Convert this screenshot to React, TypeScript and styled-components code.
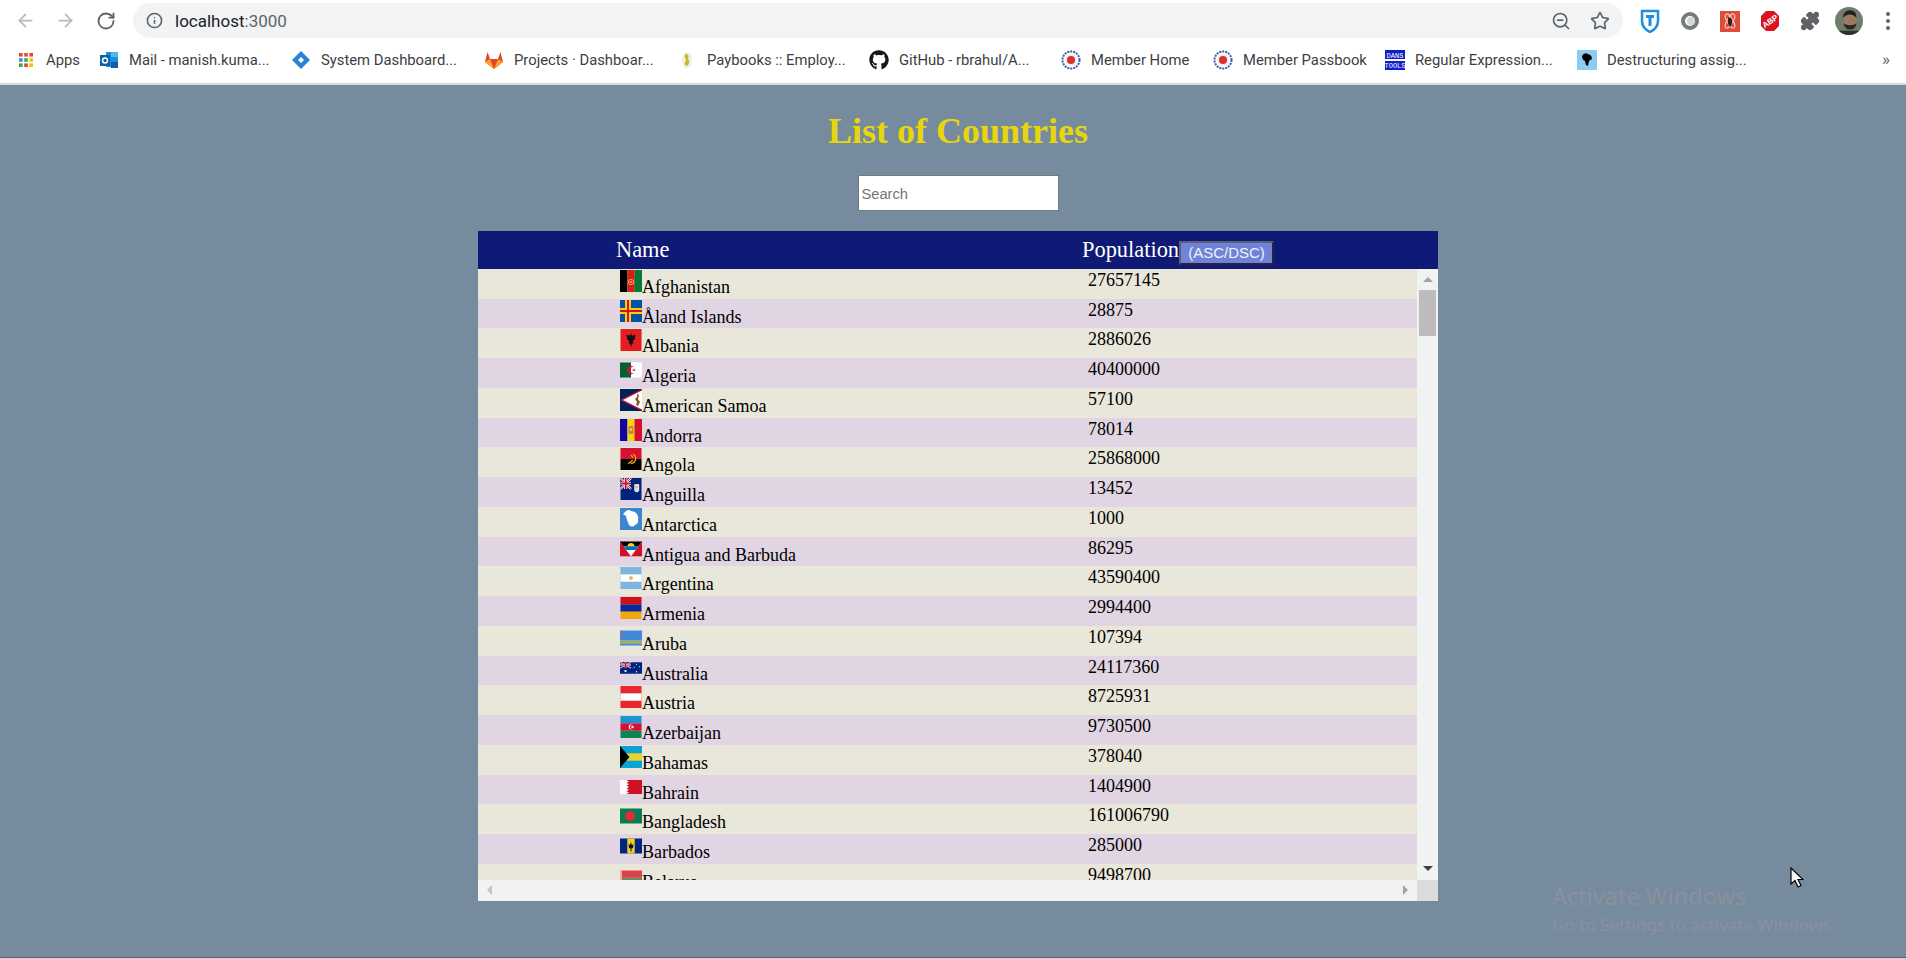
import React from "react";
import styled, { createGlobalStyle } from "styled-components";
import { ArrowLeft, ArrowRight, RotateCw, Info, ZoomOut, Star, Puzzle } from "lucide-react";
import { FaGithub } from "react-icons/fa";

const GlobalStyle = createGlobalStyle`
  html, body { margin: 0; padding: 0; height: 100%; overflow: hidden; }
  body { font-family: "Liberation Serif", "Times New Roman", serif; background: #778b9f; }
`;

const Page = styled.div`
  width: 1906px;
  height: 958px;
  display: flex;
  flex-direction: column;
  position: relative;
  overflow: hidden;
`;

/* browser chrome */
const Chrome = styled.div`
  height: 83px;
  background: #fff;
  border-bottom: 2px solid #d9dadc;
  display: flex;
  flex-direction: column;
  font-family: Roboto, "Liberation Sans", sans-serif;
`;

const NavBar = styled.div`
  height: 41px;
  display: flex;
  align-items: flex-start;
  padding-top: 3px;
  box-sizing: border-box;
`;

const NavButton = styled.div<{ $w: number }>`
  width: ${(p) => p.$w}px;
  height: 35px;
  display: flex;
  align-items: center;
  justify-content: center;
  flex: none;
`;

const NavGroup = styled.div`
  width: 133px;
  padding-left: 5px;
  box-sizing: border-box;
  display: flex;
  flex: none;
`;

const Omnibox = styled.div`
  width: 1490px;
  height: 35px;
  border-radius: 18px;
  background: #f1f3f4;
  display: flex;
  align-items: center;
  padding: 0 12px 0 13px;
  box-sizing: border-box;
  flex: none;
`;

const Url = styled.div`
  margin-left: 12px;
  font-size: 17px;
  color: #5f6368;
  flex: 1;
  span { color: #202124; }
`;

const OmniIcons = styled.div`
  display: flex;
  gap: 19px;
  align-items: center;
  margin-right: 1px;
`;

const Extensions = styled.div`
  display: flex;
  padding-left: 7px;
  align-items: center;
  height: 35px;
`;

const ExtSlot = styled.div<{ $w?: number }>`
  width: ${(p) => p.$w ?? 40}px;
  height: 35px;
  display: flex;
  align-items: center;
  justify-content: center;
  flex: none;
`;

const BookmarkBar = styled.div`
  height: 42px;
  display: flex;
  align-items: flex-start;
  padding: 8px 0 0 16px;
  box-sizing: border-box;
`;

const Bookmark = styled.div<{ $w: number }>`
  width: ${(p) => p.$w}px;
  display: flex;
  align-items: center;
  gap: 10px;
  height: 22px;
  flex: none;
  font-size: 14.8px;
  color: #3c4043;
  white-space: nowrap;
`;

const Favicon = styled.svg`
  width: 20px;
  height: 20px;
  flex: none;
`;

const MoreBookmarks = styled.div`
  margin-left: 137px;
  height: 22px;
  line-height: 20px;
  font-size: 17px;
  color: #5f6368;
`;

/* page content */
const Main = styled.main`
  flex: 1;
  display: flex;
  flex-direction: column;
  align-items: center;
  padding-left: 10px;
  border-bottom: 1px solid #4f6475;
`;

const Title = styled.h1`
  margin: 26px 0 0;
  height: 41px;
  font-size: 36px;
  line-height: 41px;
  font-weight: bold;
  color: #e8d60d;
`;

const Search = styled.input`
  display: block;
  box-sizing: border-box;
  width: 201px;
  height: 36px;
  margin-top: 23px;
  padding: 3px 3px 1px;
  border: 1px solid #777;
  border-radius: 0;
  background: #fff;
  font-family: "Liberation Sans", Arial, sans-serif;
  font-size: 14.67px;
  outline: none;
  &::placeholder { color: #757575; opacity: 1; }
`;

const Table = styled.section`
  width: 960px;
  margin-top: 20px;
`;

const HeaderRow = styled.div`
  height: 37.9px;
  background: #0f1a76;
  color: #fff;
  display: grid;
  grid-template-columns: 466px 1fr;
  padding-left: 138px;
  font-size: 22.4px;
  line-height: 37px;
`;

const SortButton = styled.button`
  box-sizing: border-box;
  height: 24px;
  width: 95px;
  padding: 0;
  vertical-align: -1px;
  border: 2px solid;
  border-color: #5f5f72 #2b2140 #2b2140 #5f5f72;
  background: #6f84d9;
  color: #f2f2f8;
  font-family: "Liberation Sans", Arial, sans-serif;
  font-size: 15px;
  line-height: 20px;
`;

const TableBody = styled.div`
  display: grid;
  grid-template-columns: 939px 21px;
  grid-template-rows: 611.1px 21px;
`;

const Rows = styled.div`
  overflow: hidden;
`;

const Row = styled.div<{ $alt: boolean }>`
  height: 29.75px;
  box-sizing: border-box;
  padding: 1px 0 0 142px;
  display: grid;
  grid-template-columns: 468px 1fr;
  background: ${(p) => (p.$alt ? "#e1d5e3" : "#e9e6da")};
  color: #000;
  font-size: 18px;
  white-space: nowrap;
`;

const NameCell = styled.div`
  line-height: normal;
`;

const FlagBox = styled.svg`
  width: 22px;
  height: 22px;
  display: inline-block;
  vertical-align: 1px;
`;

const Pop = styled.div`
  line-height: 21px;
`;

const VScroll = styled.div`
  background: #f1f3f3;
  display: flex;
  flex-direction: column;
  align-items: center;
  position: relative;
`;

const Thumb = styled.div`
  width: 17px;
  height: 46px;
  margin-top: 8px;
  background: #bdbbbc;
`;

const ArrowUp = styled.div`
  width: 0;
  height: 0;
  margin-top: 8px;
  border-left: 5px solid transparent;
  border-right: 5px solid transparent;
  border-bottom: 5px solid #a3a3a3;
`;

const ArrowDown = styled.div`
  position: absolute;
  bottom: 9px;
  width: 0;
  height: 0;
  border-left: 5px solid transparent;
  border-right: 5px solid transparent;
  border-top: 5px solid #404040;
`;

const HScroll = styled.div`
  background: #f1f3f3;
  display: flex;
  align-items: center;
  justify-content: space-between;
  padding: 0 9px;
`;

const ArrowSide = styled.div<{ $dir: "left" | "right" }>`
  width: 0;
  height: 0;
  border-top: 5px solid transparent;
  border-bottom: 5px solid transparent;
  ${(p) => (p.$dir === "left" ? "border-right: 5px solid #c4c6c6;" : "border-left: 5px solid #a3a3a3;")}
`;

const Corner = styled.div`
  background: #dcdcdc;
`;

const Watermark = styled.div`
  position: absolute;
  left: 1552px;
  top: 880px;
  font-family: "Noto Sans", "Open Sans", sans-serif;
  color: #8a919c;
  white-space: nowrap;
`;

const WatermarkTitle = styled.div`
  font-size: 23.5px;
  line-height: 32px;
`;

const WatermarkSub = styled.div`
  font-size: 17.1px;
  line-height: 24px;
  margin-top: 1px;
`;

const Cursor = styled.svg`
  position: absolute;
  left: 1790px;
  top: 867px;
  width: 14px;
  height: 21px;
`;

/* flags */
const UnionJack = ({ w, h }: { w: number; h: number }) => (
  <g>
    <rect width={w} height={h} fill="#012169" />
    <path d={`M0 0L${w} ${h}M${w} 0L0 ${h}`} stroke="#fff" strokeWidth={h / 5} />
    <path d={`M0 0L${w} ${h}M${w} 0L0 ${h}`} stroke="#c8102e" strokeWidth={h / 12} />
    <path d={`M${w / 2} 0V${h}M0 ${h / 2}H${w}`} stroke="#fff" strokeWidth={h / 3.4} />
    <path d={`M${w / 2} 0V${h}M0 ${h / 2}H${w}`} stroke="#c8102e" strokeWidth={h / 6} />
  </g>
);

const Flag = ({ vb, children }: { vb: [number, number]; children: React.ReactNode }) => (
  <FlagBox viewBox={`0 0 ${vb[0]} ${vb[1]}`}>{children}</FlagBox>
);

const flags: Record<string, React.ReactNode> = {
  Afghanistan: (
    <Flag vb={[22, 22]}>
      <rect width="7.4" height="22" fill="#000" />
      <rect x="7.4" width="7.4" height="22" fill="#d32011" />
      <rect x="14.8" width="7.2" height="22" fill="#007a36" />
      <circle cx="11" cy="12" r="2.6" fill="none" stroke="#e8a48c" strokeWidth="1" />
      <circle cx="11" cy="12" r="0.9" fill="#eec0a0" />
    </Flag>
  ),
  Åland: (
    <Flag vb={[22, 22]}>
      <rect width="22" height="22" fill="#0053a5" />
      <path d="M8 0V22M0 11H22" stroke="#ffce00" strokeWidth="6" />
      <path d="M8 0V22M0 11H22" stroke="#d21034" strokeWidth="2" />
    </Flag>
  ),
  Albania: (
    <Flag vb={[22, 23]}>
      <rect width="22" height="23" fill="#e41e20" />
      <path d="M11 4.500L12 7L15.500 6L15 11L13 12L13.500 15L12 15.500L11 19L10 15.500L8.500 15L9 12L7 11L6.500 6L10 7z" fill="#111" />
    </Flag>
  ),
  Algeria: (
    <Flag vb={[22, 15]}>
      <rect width="11" height="15" fill="#006233" />
      <rect x="11" width="11" height="15" fill="#fff" />
      <path d="M13.500 4.300A4 4 0 1 0 13.500 10.700A3.200 3.200 0 1 1 13.500 4.300z" fill="#d21034" />
      <path d="M12 7.500L15.500 6L14.500 7.500L15.500 9z" fill="#d21034" />
    </Flag>
  ),
  "American Samoa": (
    <Flag vb={[22, 22]}>
      <rect width="22" height="22" fill="#00205b" />
      <path d="M22 0L0 11L22 22z" fill="#c8102e" />
      <path d="M22 1.500L3 11L22 20.500z" fill="#fff" />
      <path d="M17 5l2 1-1 4 2 3-2 4-2-1 1-3-2-3 2-2z" fill="#8a5a2b" />
    </Flag>
  ),
  Andorra: (
    <Flag vb={[22, 22]}>
      <rect width="7.500" height="22" fill="#10069f" />
      <rect x="7.500" width="7" height="22" fill="#f0da0a" />
      <rect x="14.500" width="7.500" height="22" fill="#d50f2c" />
      <rect x="8.500" y="7" width="5" height="8" rx="1.500" fill="#c7832e" />
      <rect x="9.800" y="9" width="2.400" height="3" fill="#e6c26a" />
    </Flag>
  ),
  Angola: (
    <Flag vb={[22, 23]}>
      <rect width="22" height="11.500" fill="#d5122f" />
      <rect y="11.500" width="22" height="11.500" fill="#000" />
      <path d="M13 6.500A5 5 0 0 1 10.500 16" fill="none" stroke="#f5a81c" strokeWidth="1.300" />
      <path d="M8 16.500L13 12.500M11 7.500L13 10" stroke="#f5a81c" strokeWidth="1.200" fill="none" />
    </Flag>
  ),
  Anguilla: (
    <Flag vb={[22, 23]}>
      <rect width="22" height="23" fill="#00247d" />
      <UnionJack w={11} h={11.500} />
      <path d="M14.500 6.500h5v6.500q-2.500 4-5 0z" fill="#fff" />
      <path d="M14.800 12h4.400q-2.200 4.500-4.400 0z" fill="#9fd0ee" />
      <path d="M15.500 8h3v3h-3z" fill="#e8b06a" />
    </Flag>
  ),
  Antarctica: (
    <Flag vb={[22, 22]}>
      <rect width="22" height="22" fill="#3a86d1" />
      <path d="M6 3Q9 1 11 3L15 4Q19 7 18 12Q19 15 15 17Q12 20 9 17L7 12L6 8L3 6z" fill="#fff" />
    </Flag>
  ),
  "Antigua and Barbuda": (
    <Flag vb={[22, 15]}>
      <rect width="22" height="15" fill="#ce1126" />
      <rect y="14.500" width="22" height=".5" fill="#eebcb0" />
      <path d="M0 0H22L11 15z" fill="#fff" />
      <path d="M0 0H22L18.300 5H3.700z" fill="#000" />
      <path d="M7.500 5a3.500 3.500 0 0 1 7 0z" fill="#fcd116" />
      <path d="M3.700 5H18.300L15.700 8.500H6.300z" fill="#0072c6" />
    </Flag>
  ),
  Argentina: (
    <Flag vb={[22, 23]}>
      <rect width="22" height="23" fill="#7eb4e0" />
      <rect y="7.700" width="22" height="7.700" fill="#fff" />
      <circle cx="11" cy="11.500" r="2" fill="#e8b45a" />
    </Flag>
  ),
  Armenia: (
    <Flag vb={[22, 23]}>
      <rect width="22" height="7.700" fill="#d00f17" />
      <rect y="7.700" width="22" height="7.700" fill="#0a2a90" />
      <rect y="15.400" width="22" height="7.600" fill="#f0a80c" />
    </Flag>
  ),
  Aruba: (
    <Flag vb={[22, 15]}>
      <rect width="22" height="15" fill="#4189dd" />
      <rect y="10" width="22" height="1" fill="#f0d020" />
      <rect y="12" width="22" height="1" fill="#f0d020" />
      <path d="M3.500 2l.7 1.800 1.800.7-1.800.7-.7 1.800-.7-1.800-1.800-.7 1.800-.7z" fill="#e05050" />
    </Flag>
  ),
  Australia: (
    <Flag vb={[22, 11.500]}>
      <rect width="22" height="11.500" fill="#00247d" />
      <UnionJack w={11} h={5.800} />
      <g fill="#fff">
        <circle cx="5.500" cy="8.800" r="1.100" />
        <circle cx="16.500" cy="2" r=".6" />
        <circle cx="14" cy="5" r=".6" />
        <circle cx="19.500" cy="4.500" r=".6" />
        <circle cx="16.500" cy="9.500" r=".7" />
      </g>
    </Flag>
  ),
  Austria: (
    <Flag vb={[22, 23]}>
      <rect width="22" height="23" fill="#e8262f" />
      <rect y="7.700" width="22" height="7.700" fill="#fff" />
    </Flag>
  ),
  Azerbaijan: (
    <Flag vb={[22, 23]}>
      <rect width="22" height="7.700" fill="#1d93d1" />
      <rect y="7.700" width="22" height="7.700" fill="#d90f2e" />
      <rect y="15.400" width="22" height="7.600" fill="#0d8454" />
      <circle cx="11" cy="11.500" r="2.500" fill="#fff" />
      <circle cx="11.800" cy="11.500" r="2" fill="#d90f2e" />
      <rect x="11.500" y="10.500" width="2" height="2" fill="#fff" />
    </Flag>
  ),
  Bahamas: (
    <Flag vb={[22, 22]}>
      <rect width="22" height="22" fill="#0aa4d4" />
      <rect y="7.300" width="22" height="7.400" fill="#e8d12c" />
      <path d="M0 0L9.500 11L0 22z" fill="#000" />
    </Flag>
  ),
  Bahrain: (
    <Flag vb={[22, 14]}>
      <rect width="22" height="14" fill="#ce1126" />
      <path d="M0 0H6.500L9 1.400 6.500 2.800 9 4.200 6.500 5.600 9 7 6.500 8.400 9 9.800 6.500 11.200 9 12.600 6.500 14H0z" fill="#fff" />
    </Flag>
  ),
  Bangladesh: (
    <Flag vb={[22, 15]}>
      <rect width="22" height="15" fill="#0a7a50" />
      <circle cx="10" cy="7.500" r="4.800" fill="#ea2839" />
    </Flag>
  ),
  Barbados: (
    <Flag vb={[22, 15]}>
      <rect width="22" height="15" fill="#00267f" />
      <rect x="7.300" width="7.400" height="15" fill="#f0cf2a" />
      <path d="M11 3.500l1 3 1.500-1-.5 4-1.500.5V13h-1V10L9 9.500l-.5-4 1.500 1z" fill="#111" />
    </Flag>
  ),
  Belarus: (
    <Flag vb={[22, 11]}>
      <rect width="22" height="7.300" fill="#dd4146" />
      <rect y="7.300" width="22" height="3.700" fill="#6a8a60" />
      <rect width="2" height="11" fill="#eeb0a8" />
    </Flag>
  ),
};

const countries: [string, string, string][] = [
  ["Afghanistan", "Afghanistan", "27657145"],
  ["Åland", "Åland Islands", "28875"],
  ["Albania", "Albania", "2886026"],
  ["Algeria", "Algeria", "40400000"],
  ["American Samoa", "American Samoa", "57100"],
  ["Andorra", "Andorra", "78014"],
  ["Angola", "Angola", "25868000"],
  ["Anguilla", "Anguilla", "13452"],
  ["Antarctica", "Antarctica", "1000"],
  ["Antigua and Barbuda", "Antigua and Barbuda", "86295"],
  ["Argentina", "Argentina", "43590400"],
  ["Armenia", "Armenia", "2994400"],
  ["Aruba", "Aruba", "107394"],
  ["Australia", "Australia", "24117360"],
  ["Austria", "Austria", "8725931"],
  ["Azerbaijan", "Azerbaijan", "9730500"],
  ["Bahamas", "Bahamas", "378040"],
  ["Bahrain", "Bahrain", "1404900"],
  ["Bangladesh", "Bangladesh", "161006790"],
  ["Barbados", "Barbados", "285000"],
  ["Belarus", "Belarus", "9498700"],
];

/* bookmark favicons */
const AppsIcon = () => (
  <Favicon viewBox="0 0 20 20">
    {[
      ["#ea4335", "#ea4335", "#ea4335"],
      ["#4285f4", "#34a853", "#fbbc05"],
      ["#34a853", "#ea4335", "#fbbc05"],
    ].map((r, y) => r.map((c, x) => <rect key={`${x}${y}`} x={3 + x * 5.2} y={3 + y * 5.2} width="3.600" height="3.600" fill={c} />))}
  </Favicon>
);

const OutlookIcon = () => (
  <Favicon viewBox="0 0 20 20">
    <rect x="7" y="2" width="12" height="15" fill="#1d8fd8" />
    <rect x="12" y="2" width="7" height="5" fill="#50b4ee" />
    <rect x="12" y="12" width="7" height="6" fill="#0f5ea8" />
    <rect x="1" y="5" width="10" height="11" fill="#0a62ad" />
    <circle cx="6" cy="10.500" r="2.500" fill="none" stroke="#fff" strokeWidth="1.500" />
  </Favicon>
);

const JiraIcon = () => (
  <Favicon viewBox="0 0 20 20">
    <path d="M10 1L19 10L10 19L1 10z" fill="#2684d8" />
    <path d="M10 7L13 10L10 13L7 10z" fill="#fff" />
  </Favicon>
);

const GitlabIcon = () => (
  <Favicon viewBox="0 0 20 20">
    <path d="M10 19L1 12L3.500 2L6 9H14L16.500 2L19 12z" fill="#e24329" />
    <path d="M10 19L1 12L6 9z" fill="#fca326" />
    <path d="M10 19L19 12L14 9z" fill="#fca326" />
  </Favicon>
);

const PaybooksIcon = () => (
  <Favicon viewBox="0 0 20 20">
    <ellipse cx="10" cy="10" rx="5" ry="8" fill="#eeeeea" />
    <path d="M8 4q5 0 3 5q3 3-1 7q-3-1-2-4q2-2 0-4z" fill="#c6b92c" />
  </Favicon>
);

const EpfIcon = () => (
  <Favicon viewBox="0 0 20 20">
    <circle cx="10" cy="10" r="8.500" fill="none" stroke="#3b5aa8" strokeWidth="2" strokeDasharray="2 1" />
    <circle cx="10" cy="10" r="6" fill="#f4e9e9" />
    <circle cx="10" cy="10" r="4" fill="#d83030" />
  </Favicon>
);

const DansIcon = () => (
  <Favicon viewBox="0 0 20 20">
    <rect width="20" height="20" fill="#0f1ecb" />
    <rect y="9" width="20" height="2" fill="#fff" />
    <text x="10" y="7.500" textAnchor="middle" fontSize="7" fontFamily="Liberation Mono, monospace" fill="#fff">DANS</text>
    <text x="10" y="17.500" textAnchor="middle" fontSize="7" fontFamily="Liberation Mono, monospace" fill="#fff">TOOLS</text>
  </Favicon>
);

const DestructIcon = () => (
  <Favicon viewBox="0 0 20 20">
    <rect width="20" height="20" fill="#8cccf0" />
    <path d="M5 6q2-4 6-2q4 1 4 5q-2 1-3 2l-1 5-2-1-1-4q-3-1-3-5z" fill="#000" />
  </Favicon>
);

/* toolbar extension icons */
const ExtIcon = styled.svg`
  width: 22px;
  height: 24px;
`;

const Avatar = () => (
  <svg width="28" height="28" viewBox="0 0 26 26">
    <clipPath id="avatar"><circle cx="13" cy="13" r="13" /></clipPath>
    <g clipPath="url(#avatar)">
      <rect width="26" height="26" fill="#6f7d6a" />
      <ellipse cx="14" cy="13" rx="6" ry="8" fill="#9a7a62" />
      <path d="M7 10q1-7 7-7t6 7q-3-3-6-3t-7 3z" fill="#222" />
      <path d="M8 15q1 6 6 6t6-6q-2 2-6 2t-6-2z" fill="#2d2623" />
      <rect x="3" y="22" width="22" height="5" fill="#30302e" />
    </g>
  </svg>
);

const bookmarks: [number, React.ReactNode, string][] = [
  [83, <AppsIcon />, "Apps"],
  [192, <OutlookIcon />, "Mail - manish.kuma..."],
  [193, <JiraIcon />, "System Dashboard..."],
  [193, <GitlabIcon />, "Projects · Dashboar..."],
  [192, <PaybooksIcon />, "Paybooks :: Employ..."],
  [192, <FaGithub size={20} color="#191717" />, "GitHub - rbrahul/A..."],
  [152, <EpfIcon />, "Member Home"],
  [172, <EpfIcon />, "Member Passbook"],
  [192, <DansIcon />, "Regular Expression..."],
  [168, <DestructIcon />, "Destructuring assig..."],
];

export default function App() {
  return (
    <Page>
      <GlobalStyle />
      <Chrome>
        <NavBar>
          <NavGroup>
            <NavButton $w={40}><ArrowLeft size={21} color="#b7b9bc" strokeWidth={2} /></NavButton>
            <NavButton $w={40}><ArrowRight size={21} color="#b7b9bc" strokeWidth={2} /></NavButton>
            <NavButton $w={42}><RotateCw size={20} color="#5f6368" strokeWidth={2.2} /></NavButton>
          </NavGroup>
          <Omnibox>
            <Info size={17} color="#5f6368" strokeWidth={2.2} />
            <Url><span>localhost</span>:3000</Url>
            <OmniIcons>
              <ZoomOut size={20} color="#5f6368" strokeWidth={2} />
              <Star size={20} color="#5f6368" strokeWidth={2} />
            </OmniIcons>
          </Omnibox>
          <Extensions>
            <ExtSlot>
              <ExtIcon viewBox="0 0 22 24">
                <path d="M3 2H19V12Q19 19 11 23Q3 19 3 12z" fill="none" stroke="#1c8ee0" strokeWidth="2.500" />
                <path d="M7 6H15V9H12.500V17H9.500V9H7z" fill="#1c8ee0" />
              </ExtIcon>
            </ExtSlot>
            <ExtSlot>
              <ExtIcon viewBox="0 0 22 24">
                <circle cx="11" cy="12" r="7" fill="none" stroke="#777b7c" strokeWidth="4" />
                <circle cx="12" cy="12" r="4" fill="#d6d8d8" />
              </ExtIcon>
            </ExtSlot>
            <ExtSlot>
              <ExtIcon viewBox="0 0 22 24">
                <rect x="1" y="2" width="20" height="21" fill="#dd4b39" />
                <ellipse cx="11" cy="12" rx="8" ry="3" fill="none" stroke="#f4c9c0" strokeWidth="1" transform="rotate(60 11 12)" />
                <ellipse cx="11" cy="12" rx="8" ry="3" fill="none" stroke="#f4c9c0" strokeWidth="1" transform="rotate(-60 11 12)" />
                <path d="M9 8l4 2 0 5-2 3-2-3z" fill="#3a1f1a" />
              </ExtIcon>
            </ExtSlot>
            <ExtSlot>
              <ExtIcon viewBox="0 0 22 24">
                <path d="M7 2H15L20 7V17L15 22H7L2 17V7z" fill="#d8141f" />
                <text x="11" y="15" textAnchor="middle" fontSize="8" fontWeight="bold" fontFamily="Liberation Sans, sans-serif" fill="#fff" transform="rotate(-35 11 12)">ABP</text>
              </ExtIcon>
            </ExtSlot>
            <ExtSlot><Puzzle size={20} color="#5f6368" fill="#5f6368" /></ExtSlot>
            <ExtSlot $w={38}><Avatar /></ExtSlot>
            <ExtSlot $w={40}>
              <svg width="4" height="18" viewBox="0 0 4 18">
                <circle cx="2" cy="2" r="2" fill="#5f6368" />
                <circle cx="2" cy="9" r="2" fill="#5f6368" />
                <circle cx="2" cy="16" r="2" fill="#5f6368" />
              </svg>
            </ExtSlot>
          </Extensions>
        </NavBar>
        <BookmarkBar>
          {bookmarks.map(([w, icon, label]) => (
            <Bookmark key={label} $w={w}>
              {icon}
              {label}
            </Bookmark>
          ))}
          <MoreBookmarks>»</MoreBookmarks>
        </BookmarkBar>
      </Chrome>

      <Main>
        <Title>List of Countries</Title>
        <Search placeholder="Search" />
        <Table>
          <HeaderRow>
            <div>Name</div>
            <div>
              Population<SortButton>(ASC/DSC)</SortButton>
            </div>
          </HeaderRow>
          <TableBody>
            <Rows>
              {countries.map(([key, name, pop], i) => (
                <Row key={key} $alt={i % 2 === 1}>
                  <NameCell>
                    {flags[key]}
                    {name}
                  </NameCell>
                  <Pop>{pop}</Pop>
                </Row>
              ))}
            </Rows>
            <VScroll>
              <ArrowUp />
              <Thumb />
              <ArrowDown />
            </VScroll>
            <HScroll>
              <ArrowSide $dir="left" />
              <ArrowSide $dir="right" />
            </HScroll>
            <Corner />
          </TableBody>
        </Table>
      </Main>

      <Watermark>
        <WatermarkTitle>Activate Windows</WatermarkTitle>
        <WatermarkSub>Go to Settings to activate Windows.</WatermarkSub>
      </Watermark>
      <Cursor viewBox="0 0 14 21">
        <path d="M1 1V17L5 13.500L8 20L11 18.500L8 12.500H13z" fill="#fff" stroke="#000" strokeWidth="1.200" />
      </Cursor>
    </Page>
  );
}
